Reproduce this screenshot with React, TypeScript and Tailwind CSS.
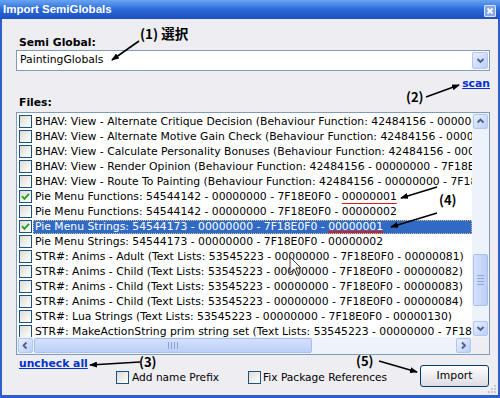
import React from "react";

type Row = {
  text: string;
  mark?: string;
  checked?: boolean;
  selected?: boolean;
};

const rows: Row[] = [
  { text: "BHAV: View - Alternate Critique Decision (Behaviour Function: 42484156 - 00000000 - 7F18E0F0 - 00001001)" },
  { text: "BHAV: View - Alternate Motive Gain Check (Behaviour Function: 42484156 - 00000000 - 7F18E0F0 - 00001002)" },
  { text: "BHAV: View - Calculate Personality Bonuses (Behaviour Function: 42484156 - 00000000 - 7F18E0F0 - 00001003)" },
  { text: "BHAV: View - Render Opinion (Behaviour Function: 42484156 - 00000000 - 7F18E0F0 - 00001004)" },
  { text: "BHAV: View - Route To Painting (Behaviour Function: 42484156 - 00000000 - 7F18E0F0 - 00001005)" },
  { text: "Pie Menu Functions: 54544142 - 00000000 - 7F18E0F0 - ", mark: "00000001", checked: true },
  { text: "Pie Menu Functions: 54544142 - 00000000 - 7F18E0F0 - 00000002" },
  { text: "Pie Menu Strings: 54544173 - 00000000 - 7F18E0F0 - ", mark: "00000001", checked: true, selected: true },
  { text: "Pie Menu Strings: 54544173 - 00000000 - 7F18E0F0 - 00000002" },
  { text: "STR#: Anims - Adult (Text Lists: 53545223 - 00000000 - 7F18E0F0 - 00000081)" },
  { text: "STR#: Anims - Child (Text Lists: 53545223 - 00000000 - 7F18E0F0 - 00000082)" },
  { text: "STR#: Anims - Child (Text Lists: 53545223 - 00000000 - 7F18E0F0 - 00000083)" },
  { text: "STR#: Anims - Child (Text Lists: 53545223 - 00000000 - 7F18E0F0 - 00000084)" },
  { text: "STR#: Lua Strings (Text Lists: 53545223 - 00000000 - 7F18E0F0 - 00000130)" },
  { text: "STR#: MakeActionString prim string set (Text Lists: 53545223 - 00000000 - 7F18E0F0 - 00000085)" },
];

function Box({ checked }: { checked?: boolean }) {
  return (
    <span className="w-[13px] h-[13px] shrink-0 border border-[#1c5180] bg-linear-to-br from-[#dcdcd5] to-white flex items-center justify-center">
      {checked && (
        <svg width="9" height="9" viewBox="0 0 9 9">
          <path d="M1 4.2 L3.4 6.8 L8 1.8" stroke="#21a121" strokeWidth="1.8" fill="none" />
        </svg>
      )}
    </span>
  );
}

// little XP scroll / combo button with a chevron
function Arrow({ dir, className = "" }: { dir: "up" | "down" | "left" | "right"; className?: string }) {
  const d = {
    up: "M1.5 5.5 L4.5 2.5 L7.5 5.5",
    down: "M1.5 3 L4.5 6 L7.5 3",
    left: "M5.5 1.5 L2.5 4.5 L5.5 7.5",
    right: "M3 1.5 L6 4.5 L3 7.5",
  }[dir];
  return (
    <div
      className={
        "shrink-0 rounded-[2px] border border-[#b2c6f2] bg-linear-to-br from-[#e8effd] to-[#bccff8] flex items-center justify-center " +
        className
      }
    >
      <svg width="9" height="9" viewBox="0 0 9 9">
        <path d={d} stroke="#4d6185" strokeWidth="1.8" fill="none" />
      </svg>
    </div>
  );
}

export default function App() {
  return (
    <div className="w-[500px] h-[398px] relative overflow-hidden flex flex-col bg-[#2d5fcc] font-['DejaVu_Sans',sans-serif] text-black">
      {/* title bar */}
      <div className="h-[19px] shrink-0 bg-linear-to-b from-[#6aa5f2] via-[#2b69d9] to-[#1d50c2] flex items-center pl-[3px] pr-[4px]">
        <span className="text-white font-bold text-[11.5px] font-['Liberation_Sans',sans-serif]">
          Import SemiGlobals
        </span>
        <div className="ml-auto w-[12px] h-[12px] mt-[3px] rounded-[1px] border border-[#dbe5fa] bg-[#86a8e8] flex items-center justify-center">
          <svg width="8" height="8" viewBox="0 0 8 8">
            <path d="M1.5 1.5 L6.5 6.5 M6.5 1.5 L1.5 6.5" stroke="white" strokeWidth="1.8" />
          </svg>
        </div>
      </div>

      {/* body */}
      <div className="flex-1 mx-[2px] mb-[3px] bg-[#eeedf2] flex flex-col pl-[14px] pr-[8px]">
        <div className="pt-[17px] pl-[3px] text-[10.8px] leading-[13px] font-bold">Semi Global:</div>

        <div className="mt-[1px] h-[21px] border border-[#7f9db9] bg-white flex items-center pr-[1px]">
          <span className="pl-[3px] text-[10.8px]">PaintingGlobals</span>
          <Arrow dir="down" className="ml-auto w-[16px] h-[17px]" />
        </div>

        <div className="mt-[4px] h-[13px] leading-[13px] text-right">
          <span className="text-[10.8px] font-bold text-[#0033cc] underline">scan</span>
        </div>

        <div className="mt-[8px] pl-[3px] text-[10.8px] leading-[13px] font-bold">Files:</div>

        {/* file list */}
        <div className="mt-[3px] h-[243px] border border-[#7f9db9] bg-white flex flex-col">
          <div className="flex flex-1 min-h-0">
            <div className="flex-1 min-w-0 overflow-hidden pt-[1px]">
              {rows.map((r, i) => (
                <div key={i} className="h-[15px] flex items-center pl-[2px]">
                  <Box checked={r.checked} />
                  <span
                    className={
                      "ml-[1px] pl-[2px] flex-1 h-[14px] leading-[14px] whitespace-nowrap overflow-hidden text-[10.8px] " +
                      (r.selected ? "bg-[#316ac5] text-white outline-1 outline-dotted outline-[#cfc08e] -outline-offset-1" : "")
                    }
                  >
                    {r.text}
                    {r.mark && (
                      <span className={"underline decoration-[#e01818] decoration-2 " + (r.selected ? "underline-offset-[1px]" : "underline-offset-[3px]")}>
                        {r.mark}
                      </span>
                    )}
                  </span>
                </div>
              ))}
            </div>
            {/* vertical scrollbar */}
            <div className="w-[17px] shrink-0 bg-[#eef2fb] flex flex-col items-center py-[1px]">
              <Arrow dir="up" className="w-[15px] h-[15px]" />
              <div className="flex-1 w-full flex flex-col items-center pt-[125px]">
                <div className="w-[15px] h-[52px] rounded-[2px] border border-[#a9bff0] bg-linear-to-r from-[#d4e1fc] to-[#bccff8] flex flex-col items-center justify-center gap-[2px]">
                  <span className="w-[7px] h-px bg-[#8da3d6]" />
                  <span className="w-[7px] h-px bg-[#8da3d6]" />
                  <span className="w-[7px] h-px bg-[#8da3d6]" />
                  <span className="w-[7px] h-px bg-[#8da3d6]" />
                </div>
              </div>
              <Arrow dir="down" className="w-[15px] h-[15px]" />
            </div>
          </div>
          {/* horizontal scrollbar */}
          <div className="h-[17px] shrink-0 flex">
            <div className="flex-1 bg-[#eef2fb] flex items-center px-[1px]">
              <Arrow dir="left" className="w-[15px] h-[15px]" />
              <div className="ml-[1px] w-[278px] h-[15px] rounded-[2px] border border-[#a9bff0] bg-linear-to-b from-[#d4e1fc] to-[#bccff8] flex items-center justify-center gap-[2px]">
                <span className="w-px h-[7px] bg-[#8da3d6]" />
                <span className="w-px h-[7px] bg-[#8da3d6]" />
                <span className="w-px h-[7px] bg-[#8da3d6]" />
                <span className="w-px h-[7px] bg-[#8da3d6]" />
              </div>
              <Arrow dir="right" className="ml-auto w-[15px] h-[15px]" />
            </div>
            <div className="w-[17px] bg-[#eeedf2]" />
          </div>
        </div>

        {/* bottom controls */}
        <div className="flex mt-[2px]">
          <div className="flex flex-col">
            <span className="pl-[3px] h-[13px] leading-[13px] text-[10.8px] font-bold text-[#0033cc] underline">
              uncheck all
            </span>
            <div className="flex items-center pl-[100px] h-[13px] mt-[1px]">
              <div className="w-[132px] flex items-center">
                <Box />
                <span className="ml-[3px] text-[10.6px]">Add name Prefix</span>
              </div>
              <Box />
              <span className="ml-[2px] text-[10.6px] whitespace-nowrap">Fix Package References</span>
            </div>
          </div>
          <button className="ml-auto mr-[1px] mt-[8px] w-[69px] h-[22px] rounded-[3px] border border-[#003c74] bg-linear-to-b from-white to-[#dcdce4] text-[10.8px] leading-none">
            Import
          </button>
        </div>
      </div>

      {/* resize grip */}
      <svg className="absolute right-[3px] bottom-[4px]" width="10" height="10" viewBox="0 0 10 10">
        <rect x="7" y="1" width="2" height="2" fill="#c8c6d0" />
        <rect x="4" y="4" width="2" height="2" fill="#c8c6d0" />
        <rect x="7" y="4" width="2" height="2" fill="#c8c6d0" />
        <rect x="1" y="7" width="2" height="2" fill="#c8c6d0" />
        <rect x="4" y="7" width="2" height="2" fill="#c8c6d0" />
        <rect x="7" y="7" width="2" height="2" fill="#c8c6d0" />
      </svg>

      {/* annotation labels */}
      <span className="absolute left-[140px] top-[27px] text-[13.5px] leading-none font-bold font-['Noto_Sans_CJK_JP',sans-serif]">
        (1) 選択
      </span>
      <span className="absolute left-[406px] top-[90px] text-[13px] leading-none font-bold font-['Noto_Sans_CJK_JP',sans-serif]">(2)</span>
      <span className="absolute left-[139px] top-[355px] text-[13px] leading-none font-bold font-['Noto_Sans_CJK_JP',sans-serif]">(3)</span>
      <span className="absolute left-[439px] top-[193px] text-[13px] leading-none font-bold font-['Noto_Sans_CJK_JP',sans-serif]">(4)</span>
      <span className="absolute left-[356px] top-[354px] text-[13px] leading-none font-bold font-['Noto_Sans_CJK_JP',sans-serif]">(5)</span>

      {/* annotation arrows */}
      <svg className="absolute left-0 top-0 pointer-events-none" width="500" height="398" viewBox="0 0 500 398">
        <defs>
          <marker id="ah" markerWidth="8" markerHeight="6" refX="7" refY="3" orient="auto" markerUnits="userSpaceOnUse">
            <path d="M0 0 L8 3 L0 6 Z" fill="#000" />
          </marker>
        </defs>
        <g stroke="#000" strokeWidth="1.6" fill="none" markerEnd="url(#ah)">
          <line x1="139" y1="41" x2="112" y2="60" />
          <line x1="426" y1="97" x2="459" y2="85" />
          <line x1="140" y1="362" x2="90" y2="365" />
          <line x1="437" y1="187" x2="401" y2="198" />
          <line x1="437" y1="213" x2="391" y2="227" />
          <line x1="379" y1="361" x2="417" y2="372" />
        </g>
        {/* mouse pointer */}
        <path
          d="M290 257 L290 273 L294 269 L297 276 L299 275 L296 268 L301 268 Z"
          fill="white"
          stroke="#222"
          strokeWidth="1"
          opacity="0.85"
        />
      </svg>
    </div>
  );
}
